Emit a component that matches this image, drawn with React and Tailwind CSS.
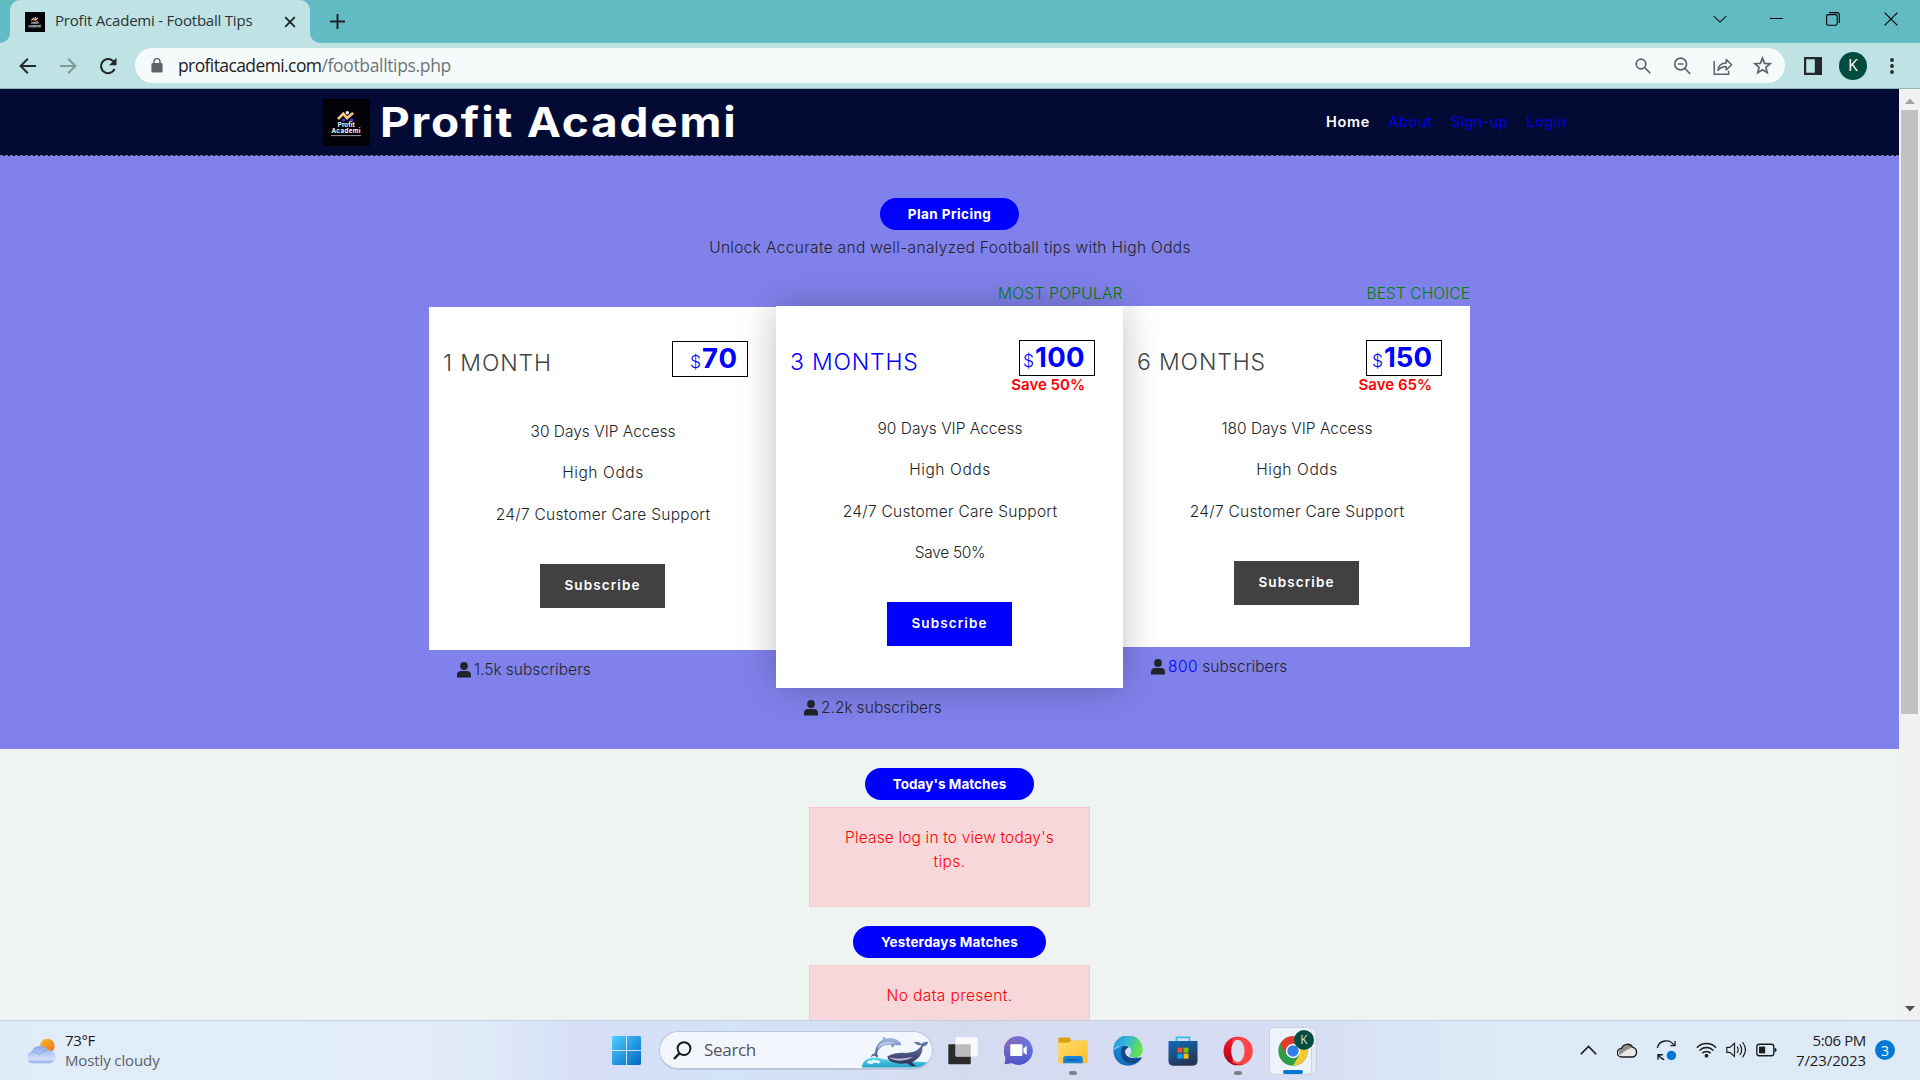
import clsx from "clsx";

const heading = "font-['Inter',sans-serif]";
const light = "font-['Inter',sans-serif] text-[15.5px] font-light leading-[24px]";
const system = "font-['Open_Sans',sans-serif]";

const Logo = ({ className }) => (
  <svg viewBox="0 0 47 47" className={className} fontFamily="Inter, sans-serif">
    <rect width="47" height="47" fill="#010106" />
    <circle cx="20.5" cy="21" r="1.6" fill="#5534f5" />
    <circle cx="28.7" cy="21" r="1.6" fill="#5534f5" />
    <path d="M15 20l5.3-5.2 3.8 4.2 6-5" fill="none" stroke="#f6c583" strokeWidth="2.8" />
    <circle cx="24.3" cy="13.7" r="1.7" fill="#fff" />
    <text x="23.3" y="28" fontSize="6.2" fontWeight="700" fill="#fff" textAnchor="middle" textLength="17">Profit</text>
    <text x="23" y="34.2" fontSize="6.2" fontWeight="700" fill="#fff" textAnchor="middle" textLength="29">Academi</text>
    <path d="M8 36.6h30" stroke="#aaa" strokeWidth="0.9" />
  </svg>
);

const Line = ({ className, children, w = 2, box = "0 0 20 20" }) => (
  <svg viewBox={box} className={className} fill="none" stroke="currentColor" strokeWidth={w}>{children}</svg>
);

function TabStrip() {
  return (
    <div className="flex h-[43px] shrink-0 items-stretch bg-[#62bac3] text-[#1f2426]">
      <div className="flex w-[10px] items-end">
        <svg viewBox="0 0 10 10" className="size-[10px]"><path d="M10 0v10H0A10 10 0 0 0 10 0z" fill="#bfe2e5" /></svg>
      </div>
      <div className="flex w-[300px] items-center rounded-t-[10px] bg-[#bfe2e5] pl-[15px]">
        <Logo className="size-5" />
        <span className={clsx(system, "ml-[10px] w-[229px] pb-[3px] text-[15px] leading-[20px] tracking-[-0.21px] text-[#2b3335]")}>Profit Academi - Football Tips</span>
        <Line className="size-[12px]" box="0 0 12 12" w={1.8}><path d="M1.2 1.2l9.6 9.6M10.8 1.2L1.2 10.8" /></Line>
      </div>
      <div className="flex w-[10px] items-end">
        <svg viewBox="0 0 10 10" className="size-[10px]"><path d="M0 0v10h10A10 10 0 0 1 0 0z" fill="#bfe2e5" /></svg>
      </div>
      <Line className="ml-[9px] size-[17px] self-center" box="0 0 17 17" w={2}><path d="M8.5 1v15M1 8.5h15" /></Line>
      <div className="ml-auto flex items-center pr-[22px] pb-[6px]">
        <Line className="mr-[43px] h-[8px] w-[14px]" box="0 0 14 8" w={1.1}><path d="M.6.8L7 7.2 13.4.8" /></Line>
        <Line className="mr-[43px] h-[2px] w-[13px] text-black" box="0 0 13 2" w={1}><path d="M0 .5h13" /></Line>
        <Line className="mr-[44px] size-[14px] text-black" box="0 0 14 14" w={1.1}>
          <rect x=".6" y="2.6" width="10.6" height="10.6" rx="1.6" />
          <path d="M3 .6h7.6a2.8 2.8 0 0 1 2.8 2.8V11" />
        </Line>
        <Line className="size-[14px] text-black" box="0 0 14 14" w={1.2}><path d="M.6.6l12.8 12.8M13.4.6L.6 13.4" /></Line>
      </div>
    </div>
  );
}

function Toolbar() {
  return (
    <div className="flex h-[46px] shrink-0 items-center border-b border-[#92b6b7] bg-[#bfe2e5] pl-[19px] text-[#22282b]">
      <Line className="h-[16px] w-[17px]" box="0 0 17 16" w={2}><path d="M17 8H1.6M8.8.8L1.6 8l7.2 7.2" /></Line>
      <Line className="ml-[24px] h-[16px] w-[17px] text-[#7e9799]" box="0 0 17 16" w={2}><path d="M0 8h15.4M8.2.8L15.4 8l-7.2 7.2" /></Line>
      <svg viewBox="0 0 18 18" className="ml-[22px] size-[18px]">
        <path d="M15.6 12A7.1 7.1 0 1 1 14 3.9l1 1" fill="none" stroke="currentColor" strokeWidth="2.1" />
        <path d="M17.5.8v7.4h-7.4z" fill="currentColor" />
      </svg>
      <div className="ml-[18px] flex h-[35px] w-[1650px] items-center rounded-full bg-[#f5fbfb] pr-[13px] pl-[16px] text-[#5f6368]">
        <svg viewBox="0 0 12 15" className="h-[15px] w-[12px]">
          <rect x=".4" y="5" width="11.2" height="9.6" rx="1.4" fill="currentColor" />
          <path d="M3 6V3.6a3 3 0 0 1 6 0V6" fill="none" stroke="currentColor" strokeWidth="1.5" />
        </svg>
        <span className={clsx(system, "ml-[15px] pb-[2px] text-[17.5px] leading-[24px] tracking-[-0.6px] text-[#1f2023]")}>profitacademi.com</span>
        <span className={clsx(system, "pb-[2px] text-[17.5px] leading-[24px] tracking-[-0.34px] text-[#707478]")}>/footballtips.php</span>
        <div className="ml-auto flex items-center">
          <Line className="size-[16px]" box="0 0 16 16" w={1.7}><circle cx="6" cy="6" r="4.8" /><path d="M9.5 9.5l5.7 5.7" /></Line>
          <Line className="ml-[22px] size-[18px]" box="0 0 18 18" w={1.7}><circle cx="7.6" cy="7" r="5.9" /><path d="M11.8 11.4l5.4 5.6M4.8 7h5.6" /></Line>
          <Line className="ml-[22px] h-[18px] w-[20px]" box="0 0 20 18" w={1.5}>
            <path d="M1.2 4v13.2h14.4v-3.4" />
            <path d="M5 13.4c.3-4.6 2.8-7.2 8.2-7.4V2.4l5.400 5.400-5.400 5.200V9.600c-3.600 0-6 .9-8.200 3.800z" strokeLinejoin="round" />
          </Line>
          <Line className="ml-[20px] size-[19px]" box="0 0 20 20" w={1.8}>
            <path d="M10 2.2l2.2 5.5 5.9.4-4.5 3.8 1.4 5.7-5-3.100-5 3.100 1.400-5.700-4.500-3.800 5.900-.4z" />
          </Line>
        </div>
      </div>
      <svg viewBox="0 0 18 18" className="ml-[19px] size-[18px]">
        <path d="M0 0h18v18H0zM2.2 2.2v13.6h8.600V2.200z" fill="currentColor" fillRule="evenodd" />
      </svg>
      <div className={clsx(system, "ml-[17px] flex size-[28px] items-center justify-center rounded-full bg-[#004d40] pb-px text-[16px] text-white")}>K</div>
      <svg viewBox="0 0 4 16" className="ml-[23px] h-[16px] w-[4px]" fill="currentColor">
        <circle cx="2" cy="2" r="1.9" /><circle cx="2" cy="8" r="1.9" /><circle cx="2" cy="14" r="1.9" />
      </svg>
    </div>
  );
}

function SiteHeader() {
  return (
    <header className="flex h-[67px] shrink-0 items-center border-b border-dashed border-[#77798a] bg-[#030b35] pl-[323px]">
      <Logo className="size-[47px]" />
      <h1 className={clsx(heading, "ml-[10px] w-[946px] origin-left scale-x-[1.12] text-[41px] leading-[50px] font-bold tracking-[1.6px] whitespace-nowrap text-white")}>Profit Academi</h1>
      <nav className={clsx(heading, "flex gap-[18.5px] text-[14.5px] leading-[20px] text-[#0000e6]")}>
        <span className="font-semibold tracking-[0.68px] text-white">Home</span>
        <span className="tracking-[0.62px]">About</span>
        <span className="tracking-[0.37px]">Sign-up</span>
        <span className="tracking-[0.53px]">Login</span>
      </nav>
    </header>
  );
}

const Pill = ({ className, children }) => (
  <div className={clsx(heading, "mx-auto flex h-[32px] items-center justify-center rounded-full bg-[#0000ff] pb-px text-[13.5px] leading-[20px] font-bold text-white", className)}>{children}</div>
);

const PersonIcon = () => (
  <svg viewBox="0 0 14 16" className="mr-[3px] h-[16px] w-[14px]" fill="#212529">
    <circle cx="7" cy="4" r="3.9" />
    <path d="M0 15.5v-2.6C0 10.6 1.7 9 4 9h6c2.3 0 4 1.6 4 3.9v2.6z" />
  </svg>
);

function Plan({ featured, label, labelSpacing, title, titleColor, titleSpacing, price, priceSpacing, save, features, count, countClass }) {
  const first = !label;
  return (
    <div className="w-[347px]">
      <div className={clsx(light, "text-right text-[#008000]", first ? "h-[25px]" : "h-[24px]", labelSpacing)}>{label}</div>
      <div className={clsx("bg-white pt-[34px] pb-[42px]", featured && "relative z-10 shadow-[0_0_35px_rgba(0,0,0,0.25)]")}>
        <div className={clsx("flex justify-between pr-[28px] pl-[14px]", first ? "h-[70px]" : "h-[68px]")}>
          <h2 className={clsx(heading, "pt-[3.5px] text-[23px] leading-[36px] font-light", titleColor, titleSpacing)}>{title}</h2>
          <div className="flex flex-col items-end">
            <div className={clsx(heading, "flex h-[36px] w-[76px] items-baseline justify-end border border-black pr-[9px] leading-[33px] text-[#0000ff]")}>
              <span className="mr-px text-[17.5px] font-light">$</span>
              <span className={clsx("text-[27.5px] font-bold", priceSpacing)}>{price}</span>
            </div>
            {save && <div className={clsx(heading, "mr-[10px] text-[15px] leading-[17px] font-semibold text-[#ff0000]")}>{save}</div>}
          </div>
        </div>
        <ul className={clsx(heading, "pl-px text-center text-[15.5px] leading-[41.25px] font-light text-[#212529]")}>
          {features.map(([text, spacing]) => <li key={text} className={spacing}>{text}</li>)}
        </ul>
        <button className={clsx(heading, "mx-auto mt-[29px] block h-[44px] w-[125px] pb-px text-[13.5px] font-semibold tracking-[1.09px] text-white", featured ? "bg-[#0000ff]" : "bg-[#414141]")}>Subscribe</button>
      </div>
      <div className={clsx(light, "mt-[8px] flex items-center pl-[28px] text-[#212529]")}>
        <PersonIcon />
        <span className={countClass}>{count}</span>
        <span className="ml-[4px] tracking-[0.08px]">subscribers</span>
      </div>
    </div>
  );
}

const support = ["24/7 Customer Care Support", "tracking-[0.27px]"];
const odds = ["High Odds", "tracking-[0.6px]"];

function Pricing() {
  return (
    <section className="h-[593px] shrink-0 bg-[#8181ec] pt-[42px]">
      <Pill className="w-[139px] tracking-[0.43px]">Plan Pricing</Pill>
      <p className={clsx(light, "mt-[6px] pl-px text-center tracking-[0.33px] text-[#212529]")}>Unlock Accurate and well-analyzed Football tips with High Odds</p>
      <div className="mt-[22px] flex items-start pl-[429px]">
        <Plan title="1 MONTH" titleColor="text-[#444444]" titleSpacing="tracking-[0.89px]" price="70" priceSpacing="tracking-[0.9px]" features={[["30 Days VIP Access", ""], odds, support]} count="1.5k" />
        <Plan featured label="MOST POPULAR" labelSpacing="tracking-[0.3px]" title="3 MONTHS" titleColor="text-[#0000ff]" titleSpacing="tracking-[0.8px]" price="100" priceSpacing="tracking-[0.35px]" save="Save 50%" features={[["90 Days VIP Access", ""], odds, support, ["Save 50%", "tracking-[-0.31px]"]]} count="2.2k" />
        <Plan label="BEST CHOICE" labelSpacing="tracking-[0.1px]" title="6 MONTHS" titleColor="text-[#444444]" titleSpacing="tracking-[0.86px]" price="150" save="Save 65%" features={[["180 Days VIP Access", ""], odds, support]} count="800" countClass="text-[#0000ff] tracking-[0.5px]" />
      </div>
    </section>
  );
}

const Alert = ({ children }) => (
  <div className={clsx(heading, "mx-auto mt-[7px] h-[100px] w-[281px] border border-[#f5c6cb] bg-[#f8d7da] px-[32px] pt-[18px] text-center text-[15.5px] leading-[23.5px] font-light text-[#ff0000]")}>{children}</div>
);

function Matches() {
  return (
    <section className="flex-1 pt-[19px]">
      <Pill className="w-[169px] tracking-[0.04px]">Today's Matches</Pill>
      <Alert><span className="tracking-[0.16px]">Please log in to view today's</span> <span className="tracking-[0.41px]">tips.</span></Alert>
      <Pill className="mt-[19px] w-[193px] tracking-[0.16px]">Yesterdays Matches</Pill>
      <Alert><span className="tracking-[0.41px]">No data present.</span></Alert>
    </section>
  );
}

function Scrollbar() {
  return (
    <div className="flex w-[21px] flex-col items-center bg-[#f1f1f1]">
      <svg viewBox="0 0 10 6" className="mt-[9px] mb-[6px] h-[6px] w-[10px]"><path d="M0 6l5-5.5L10 6z" fill="#a3a3a3" /></svg>
      <div className="h-[604px] w-[17px] bg-[#c1c1c1]" />
      <svg viewBox="0 0 10 6" className="mt-auto mb-[8px] h-[6px] w-[10px]"><path d="M0 0l5 5.5L10 0z" fill="#505050" /></svg>
    </div>
  );
}

const WeatherIcon = () => (
  <svg viewBox="78 86 91 77" className="h-[26px] w-[30px]">
    <defs>
      <linearGradient id="sun" x1="0" y1="0" x2="1" y2="1"><stop offset="0" stopColor="#f7c02f" /><stop offset="1" stopColor="#ef6a10" /></linearGradient>
      <linearGradient id="cloud" x1="0" y1="0" x2="0" y2="1"><stop offset="0" stopColor="#86a6ea" /><stop offset=".75" stopColor="#d5e0fa" /><stop offset="1" stopColor="#91a8e6" /></linearGradient>
    </defs>
    <circle cx="143" cy="109" r="22" fill="url(#sun)" />
    <path d="M97 162a18 18 0 0 1-3-35 29 29 0 0 1 51-5 20 20 0 0 1 5 40z" fill="url(#cloud)" />
    <path d="M92 128q14-4 23 5 4 4 5 2 6-12 22-12" fill="none" stroke="#7f9be2" strokeWidth="3" opacity=".7" />
  </svg>
);

const StartIcon = () => (
  <svg viewBox="0 0 29 29" className="size-[29px]">
    <defs><linearGradient id="win" gradientUnits="userSpaceOnUse" x1="0" y1="0" x2="29" y2="29"><stop offset="0" stopColor="#4fd0ff" /><stop offset="1" stopColor="#0067c6" /></linearGradient></defs>
    <path d="M1 0h13v14H0V1zM15 0h13l1 1v13H15zM0 15h14v14H1l-1-1zM15 15h14v13l-1 1H15z" fill="url(#win)" />
  </svg>
);

const DolphinArt = () => (
  <svg viewBox="783 80 200 95" className="h-[32px] w-[67px]">
    <defs>
      <linearGradient id="sea" x1="0" y1="0" x2="0" y2="1"><stop offset="0" stopColor="#62d9e8" /><stop offset="1" stopColor="#1e9fc4" /></linearGradient>
      <linearGradient id="dolphin" x1="0" y1="0" x2="0" y2="1"><stop offset="0" stopColor="#a9c0e6" /><stop offset="1" stopColor="#4a5b96" /></linearGradient>
      <linearGradient id="whale" x1="0" y1="0" x2="0" y2="1"><stop offset="0" stopColor="#6b7cb0" /><stop offset="1" stopColor="#2c2c55" /></linearGradient>
    </defs>
    <path d="M783 174c0-14 12-30 36-30 14 0 26 6 44 7 40 2 70 6 115 7-8 8-18 14-30 16z" fill="url(#sea)" />
    <path d="M797 160q6-12 14-6 8-8 14-1 8-3 14 5l-6 4-12-3-10 5z" fill="#e7fafc" />
    <path d="M841 82q10-1 14 5 16-4 31 3 12 6 15 16-10 3-22 0l-2 8q-7-1-9-8-20-2-32 10-8 8-8 18 6 4 0 10l-6-5q-6 0-14 4 4-10 13-12 2-24 18-36 4-4 7-5-1-6-5-8z" fill="url(#dolphin)" />
    <path d="M837 104q18-11 48-2-24-1-38 4-12 4-17 12 0-8 7-14z" fill="#dbe5f8" opacity=".7" />
    <path d="M859 140q20-10 46-10 34 2 47-12 10-8 6-12-12 4-20-8 14-4 22 5 8-8 21-6-2 12-17 15-1 24-16 36-8 7-16 10l12 12q-14 2-26-9-40 5-55-10-4-5-4-11z" fill="url(#whale)" />
    <path d="M863 143q30 8 74-1-24 14-48 11-20-3-26-10z" fill="#b9b6d2" />
  </svg>
);

const TaskViewIcon = () => (
  <svg viewBox="1043 78 91 85" className="h-[28px] w-[30px]">
    <rect x="1044" y="100" width="68" height="61" rx="3" fill="#2b2b2b" />
    <rect x="1066" y="79" width="67" height="58" rx="3" fill="#fafafa" />
    <path d="M1066 100h46v37h-46z" fill="#bcbcbc" />
  </svg>
);

const ChatIcon = () => (
  <svg viewBox="68 77 88 88" className="size-[29px]">
    <defs>
      <linearGradient id="chat" x1="0" y1="0" x2="1" y2=".4"><stop offset="0" stopColor="#8a62b4" /><stop offset="1" stopColor="#5f7ce0" /></linearGradient>
      <linearGradient id="chatShade" x1="0" y1="0" x2="0" y2="1"><stop offset=".3" stopColor="#4f53c6" stopOpacity="0" /><stop offset="1" stopColor="#4f53c6" /></linearGradient>
    </defs>
    <path d="M112 78a43 43 0 1 1-20 81l-22 4 3-20A43 43 0 0 1 112 78z" fill="url(#chat)" />
    <path d="M112 78a43 43 0 1 1-20 81l-22 4 3-20A43 43 0 0 1 112 78z" fill="url(#chatShade)" />
    <rect x="87" y="102" width="37" height="36" rx="4" fill="#fff" />
    <path d="M127 114l10-7v28l-10-8z" fill="#fff" />
  </svg>
);

const FolderIcon = () => (
  <svg viewBox="233 80 92 82" className="h-[27px] w-[30px]">
    <defs><linearGradient id="folder" x1="0" y1="0" x2="1" y2="1"><stop offset="0" stopColor="#ffdc6a" /><stop offset="1" stopColor="#f9bf2c" /></linearGradient></defs>
    <path d="M234 84q0-3 3-3h28q4 0 6 4l3 6h48v20h-88z" fill="#dfa012" />
    <path d="M234 97h31l9-7h47q3 0 3 3v63q0 4-4 4h-82q-4 0-4-4z" fill="url(#folder)" />
    <path d="M249 160v-14q0-8 8-8h44q8 0 8 8v14z" fill="#1583d8" />
    <path d="M262 148h34q3 0 3 2t-3 2h-34q-3 0-3-2t3-2z" fill="#0a5296" />
  </svg>
);

const EdgeIcon = () => (
  <svg viewBox="398 74 92 92" className="size-[30px]">
    <defs>
      <linearGradient id="edgeTop" x1="0" y1="0" x2="1" y2=".35"><stop offset="0" stopColor="#1d8fd6" /><stop offset=".5" stopColor="#35b8dc" /><stop offset="1" stopColor="#66e04a" /></linearGradient>
      <linearGradient id="edgeLow" x1="0" y1="0" x2="0" y2="1"><stop offset="0" stopColor="#1e8ddb" /><stop offset="1" stopColor="#1467b8" /></linearGradient>
    </defs>
    <path d="M399 117c0 28 18 48 45 48 18 0 32-8 41-22l-20-5-20-30-16-8z" fill="url(#edgeLow)" />
    <path d="M399 117a45 45 0 0 1 90-2c1 16-10 25-25 25-10 0-15-4-15-7 0-2 5-5 5-12 0-10-9-18-22-18-16 0-28 6-33 14z" fill="url(#edgeTop)" />
    <path d="M424 112c-8 22 8 46 34 46 12 0 20-6 27-15q3-6-4-3c-16 8-40-2-42-18 0-8 3-13 6-15-8-4-17-3-21 5z" fill="#114a8b" />
    <path d="M446 109c-6 2-11 7-11 13 1 16 22 24 40 16q-5 2-11 2c-10 0-15-4-15-7 0-2 5-5 5-12 0-5-3-10-8-12z" fill="#d9dff2" />
  </svg>
);

const StoreIcon = () => (
  <svg viewBox="563 76 89 90" className="size-[30px]">
    <defs><linearGradient id="store" x1="0" y1="0" x2=".4" y2="1"><stop offset="0" stopColor="#0f6cbd" /><stop offset="1" stopColor="#263655" /></linearGradient></defs>
    <path d="M588 94V80h39v14" fill="none" stroke="#32bdf2" strokeWidth="5" strokeLinejoin="round" />
    <path d="M564 91h87v60q0 14-14 14h-59q-14 0-14-14z" fill="url(#store)" />
    <path d="M591 111h15v15h-15z" fill="#f25022" /><path d="M609 111h15v15h-15z" fill="#7fba00" />
    <path d="M591 129h15v15h-15z" fill="#00a4ef" /><path d="M609 129h15v15h-15z" fill="#ffb900" />
  </svg>
);

const OperaIcon = () => (
  <svg viewBox="729 74 89 90" className="size-[30px]">
    <defs><linearGradient id="opera" x1="0" y1="0" x2="0" y2="1"><stop offset="0" stopColor="#ff1b2d" /><stop offset="1" stopColor="#a70014" /></linearGradient></defs>
    <circle cx="773" cy="119" r="43" fill="url(#opera)" />
    <path d="M757 84q20-10 36-4a43 43 0 0 1 0 78q-16 6-36-4z" fill="#ff4545" />
    <ellipse cx="773" cy="119" rx="20" ry="34" fill="#d9dff2" />
  </svg>
);

const ChromeIcon = () => (
  <svg viewBox="893 74 92 92" className="size-[30px]">
    <circle cx="939" cy="120" r="45" fill="#2f9e49" />
    <path d="M900 97.5a45 45 0 0 1 78 0H939l-20 34z" fill="#e33b2e" />
    <path d="M978 97.5a45 45 0 0 1-39 67.5l20-33.5-20-34z" fill="#fcc934" />
    <circle cx="939" cy="120" r="22" fill="#fff" /><circle cx="939" cy="120" r="17.5" fill="#2f7de9" />
  </svg>
);

const Slot = ({ children, dot }) => (
  <div className="relative flex h-[48px] w-[48px] items-center justify-center">
    {children}
    {dot && <span className="absolute bottom-0 left-[20px] h-[4px] w-[8px] rounded-full bg-[#7d818b]" />}
  </div>
);

function Taskbar() {
  return (
    <footer className="flex h-[60px] shrink-0 items-center border-t border-[#c7d2e4] bg-[linear-gradient(90deg,#e0edf8_0%,#e1ecf8_24%,#d5def6_31%,#d3e3f8_38%,#d5dbef_50%,#d5dcf3_66%,#dce9f6_76%,#deebf7_100%)] text-[#1b1b1b]">
      <div className="flex w-[602px] items-center pl-[26px]">
        <WeatherIcon />
        <div className={clsx(system, "ml-[9px] pb-[2px] text-[15px] leading-[20px]")}>
          <div className="tracking-[-0.33px]">73°F</div>
          <div className="tracking-[-0.12px] text-[#5c6167]">Mostly cloudy</div>
        </div>
      </div>
      <Slot><StartIcon /></Slot>
      <div className="ml-[9px] flex h-[39px] w-[274px] items-center rounded-full border border-b-2 border-[#bcc6db] bg-[#f3f6fd] pl-[13px]">
        <Line className="size-[19px]" box="0 0 19 19" w={2}><circle cx="11" cy="7.6" r="6.4" /><path d="M6.6 12.2L1 18" strokeWidth="2.4" /></Line>
        <span className={clsx(system, "ml-[12px] text-[17px] leading-[22px] tracking-[-0.31px] text-[#50545a]")}>Search</span>
        <div className="mt-[4px] mr-[3px] ml-auto"><DolphinArt /></div>
      </div>
      <div className="ml-[6px] flex gap-[7px]">
        <Slot><TaskViewIcon /></Slot>
        <Slot><ChatIcon /></Slot>
        <Slot dot><FolderIcon /></Slot>
        <Slot><EdgeIcon /></Slot>
        <Slot><StoreIcon /></Slot>
        <Slot dot><OperaIcon /></Slot>
        <div className="h-[48px] w-[48px] rounded-[5px] border border-[#c9d0e4] bg-[#e4e9f6]">
          <div className="relative -mt-px -ml-px flex h-[48px] w-[43px] items-center justify-center rounded-[5px] border border-[#ccd2e4] bg-[#eef2fb]">
            <div className="ml-[4px]"><ChromeIcon /></div>
            <span className={clsx(system, "absolute top-[2px] left-[24px] flex size-[20px] items-center justify-center rounded-full bg-[#034c40] text-[12px] text-[#cfe0dc]")}>K</span>
            <span className="absolute bottom-0 left-[13px] h-[4px] w-[20px] rounded-full bg-[#0078d4]" />
          </div>
        </div>
      </div>
      <div className="ml-auto flex items-center pr-[25px] pb-px">
        <Line className="h-[10px] w-[17px]" box="0 0 17 10" w={1.6}><path d="M.8 9.200l7.700-7.700 7.700 7.700" /></Line>
        <svg viewBox="170 124 62 45" className="ml-[20px] h-[15px] w-[21px]">
          <path d="M184 166a13 13 0 0 1-1-26 19 19 0 0 1 34-3 15 15 0 0 1 0 29z" fill="#e9e9e9" />
          <path d="M174 150a12 12 0 0 1 9-10 19 19 0 0 1 34-3l-20 9-19 14z" fill="#8e8e8e" />
          <path d="M184 166a13 13 0 0 1-1-26 19 19 0 0 1 34-3 15 15 0 0 1 0 29z" fill="none" stroke="#1d1d1d" strokeWidth="4" />
        </svg>
        <svg viewBox="289 118 64 64" className="ml-[18px] size-[21px]" fill="none" stroke="#1d1d1d" strokeWidth="4">
          <path d="M293 142a28 28 0 0 1 51-8M347 121v14h-14M314 178a28 28 0 0 1-18-15M295 178v-15h15" />
          <circle cx="336" cy="165" r="14.5" fill="#0078d7" stroke="none" />
        </svg>
        <svg viewBox="410 124 62 48" className="ml-[19px] h-[16px] w-[21px]" fill="none" stroke="#1d1d1d" strokeWidth="4">
          <path d="M412 141a40 40 0 0 1 58 0M420 150a28 28 0 0 1 42 0M428 158a18 18 0 0 1 26 0" />
          <circle cx="441" cy="165" r="5.5" fill="#1d1d1d" stroke="none" />
        </svg>
        <svg viewBox="500 124 62 54" className="ml-[9px] h-[18px] w-[21px]" fill="none" stroke="#1d1d1d" strokeWidth="3.6">
          <path d="M502 143h9l14-12v39l-14-12h-9zM533 141q6 9 0 19M541 134q11 16 0 32M549 127q18 24 0 46" />
        </svg>
        <svg viewBox="590 130 62 40" className="ml-[9px] h-[14px] w-[21px]">
          <rect x="592.5" y="133" width="50" height="34" rx="7" fill="none" stroke="#1d1d1d" strokeWidth="4" />
          <rect x="599" y="140" width="18" height="20" fill="#1d1d1d" /><path d="M645 143q6 1 6 7t-6 7z" fill="#1d1d1d" />
        </svg>
        <div className={clsx(system, "ml-[19px] pb-px text-right text-[15px] leading-[20px]")}>
          <div className="tracking-[-0.37px]">5:06 PM</div>
          <div className="tracking-[-0.12px]">7/23/2023</div>
        </div>
        <div className={clsx(system, "ml-[9px] flex size-[20px] items-center justify-center rounded-full bg-[#0078d7] text-[14px] text-white")}>3</div>
      </div>
    </footer>
  );
}

export default function App() {
  return (
    <div className="flex h-[1080px] w-[1920px] flex-col overflow-hidden bg-[#eff3f2]">
      <TabStrip />
      <Toolbar />
      <main className="flex h-[931px] shrink-0 overflow-hidden">
        <div className="flex h-full w-[1899px] flex-col overflow-hidden">
          <SiteHeader />
          <Pricing />
          <Matches />
        </div>
        <Scrollbar />
      </main>
      <Taskbar />
    </div>
  );
}
